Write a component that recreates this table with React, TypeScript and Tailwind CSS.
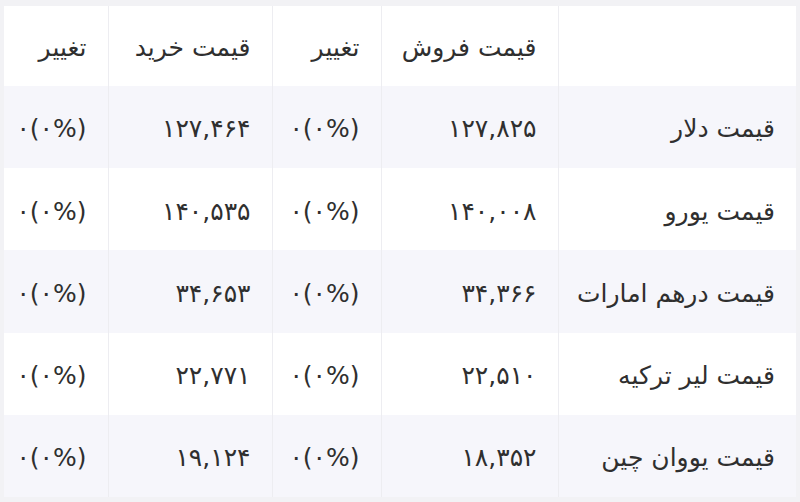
const rows = [
  { name: 'قیمت دلار', sell: '۱۲۷,۸۲۵', buy: '۱۲۷,۴۶۴' },
  { name: 'قیمت یورو', sell: '۱۴۰,۰۰۸', buy: '۱۴۰,۵۳۵' },
  { name: 'قیمت درهم امارات', sell: '۳۴,۳۶۶', buy: '۳۴,۶۵۳' },
  { name: 'قیمت لیر ترکیه', sell: '۲۲,۵۱۰', buy: '۲۲,۷۷۱' },
  { name: 'قیمت یووان چین', sell: '۱۸,۳۵۲', buy: '۱۹,۱۲۴' },
]

const cell = 'border-l border-[#ededf1] pr-[21px] pl-2 text-right align-middle pt-[4px]'

export default function App() {
  return (
    <div
      className="w-[800px] h-[502px] bg-[#f2f2f5] pt-[6px] px-[4px] pb-[5px] text-[#2f2f2f] text-[25px]"
      style={{ fontFamily: '"DejaVu Sans", sans-serif' }}
    >
      <table dir="rtl" className="w-full h-full border-collapse table-fixed">
        <colgroup>
          <col className="w-[238px]" />
          <col className="w-[177px]" />
          <col className="w-[109px]" />
          <col className="w-[164px]" />
          <col className="w-[104px]" />
        </colgroup>
        <thead>
          <tr className="bg-white h-[80px]">
            <th className={cell + ' font-normal'}></th>
            <th className={cell + ' font-normal'}>قیمت فروش</th>
            <th className={cell + ' font-normal'}>تغییر</th>
            <th className={cell + ' font-normal'}>قیمت خرید</th>
            <th className="pr-[21px] pl-2 pt-[4px] text-right font-normal">تغییر</th>
          </tr>
        </thead>
        <tbody>
          {rows.map((r, i) => (
            <tr key={r.name} className={i % 2 === 0 ? 'bg-[#f6f6fb]' : 'bg-white'}>
              <td className={cell}>{r.name}</td>
              <td className={cell}>
                <span dir="ltr">{r.sell}</span>
              </td>
              <td className={cell}>
                <span dir="ltr" className="tracking-[-1.5px]">۰(۰%)</span>
              </td>
              <td className={cell}>
                <span dir="ltr">{r.buy}</span>
              </td>
              <td className="pr-[21px] pl-2 pt-[4px] text-right">
                <span dir="ltr" className="tracking-[-1.5px]">۰(۰%)</span>
              </td>
            </tr>
          ))}
        </tbody>
      </table>
    </div>
  )
}
